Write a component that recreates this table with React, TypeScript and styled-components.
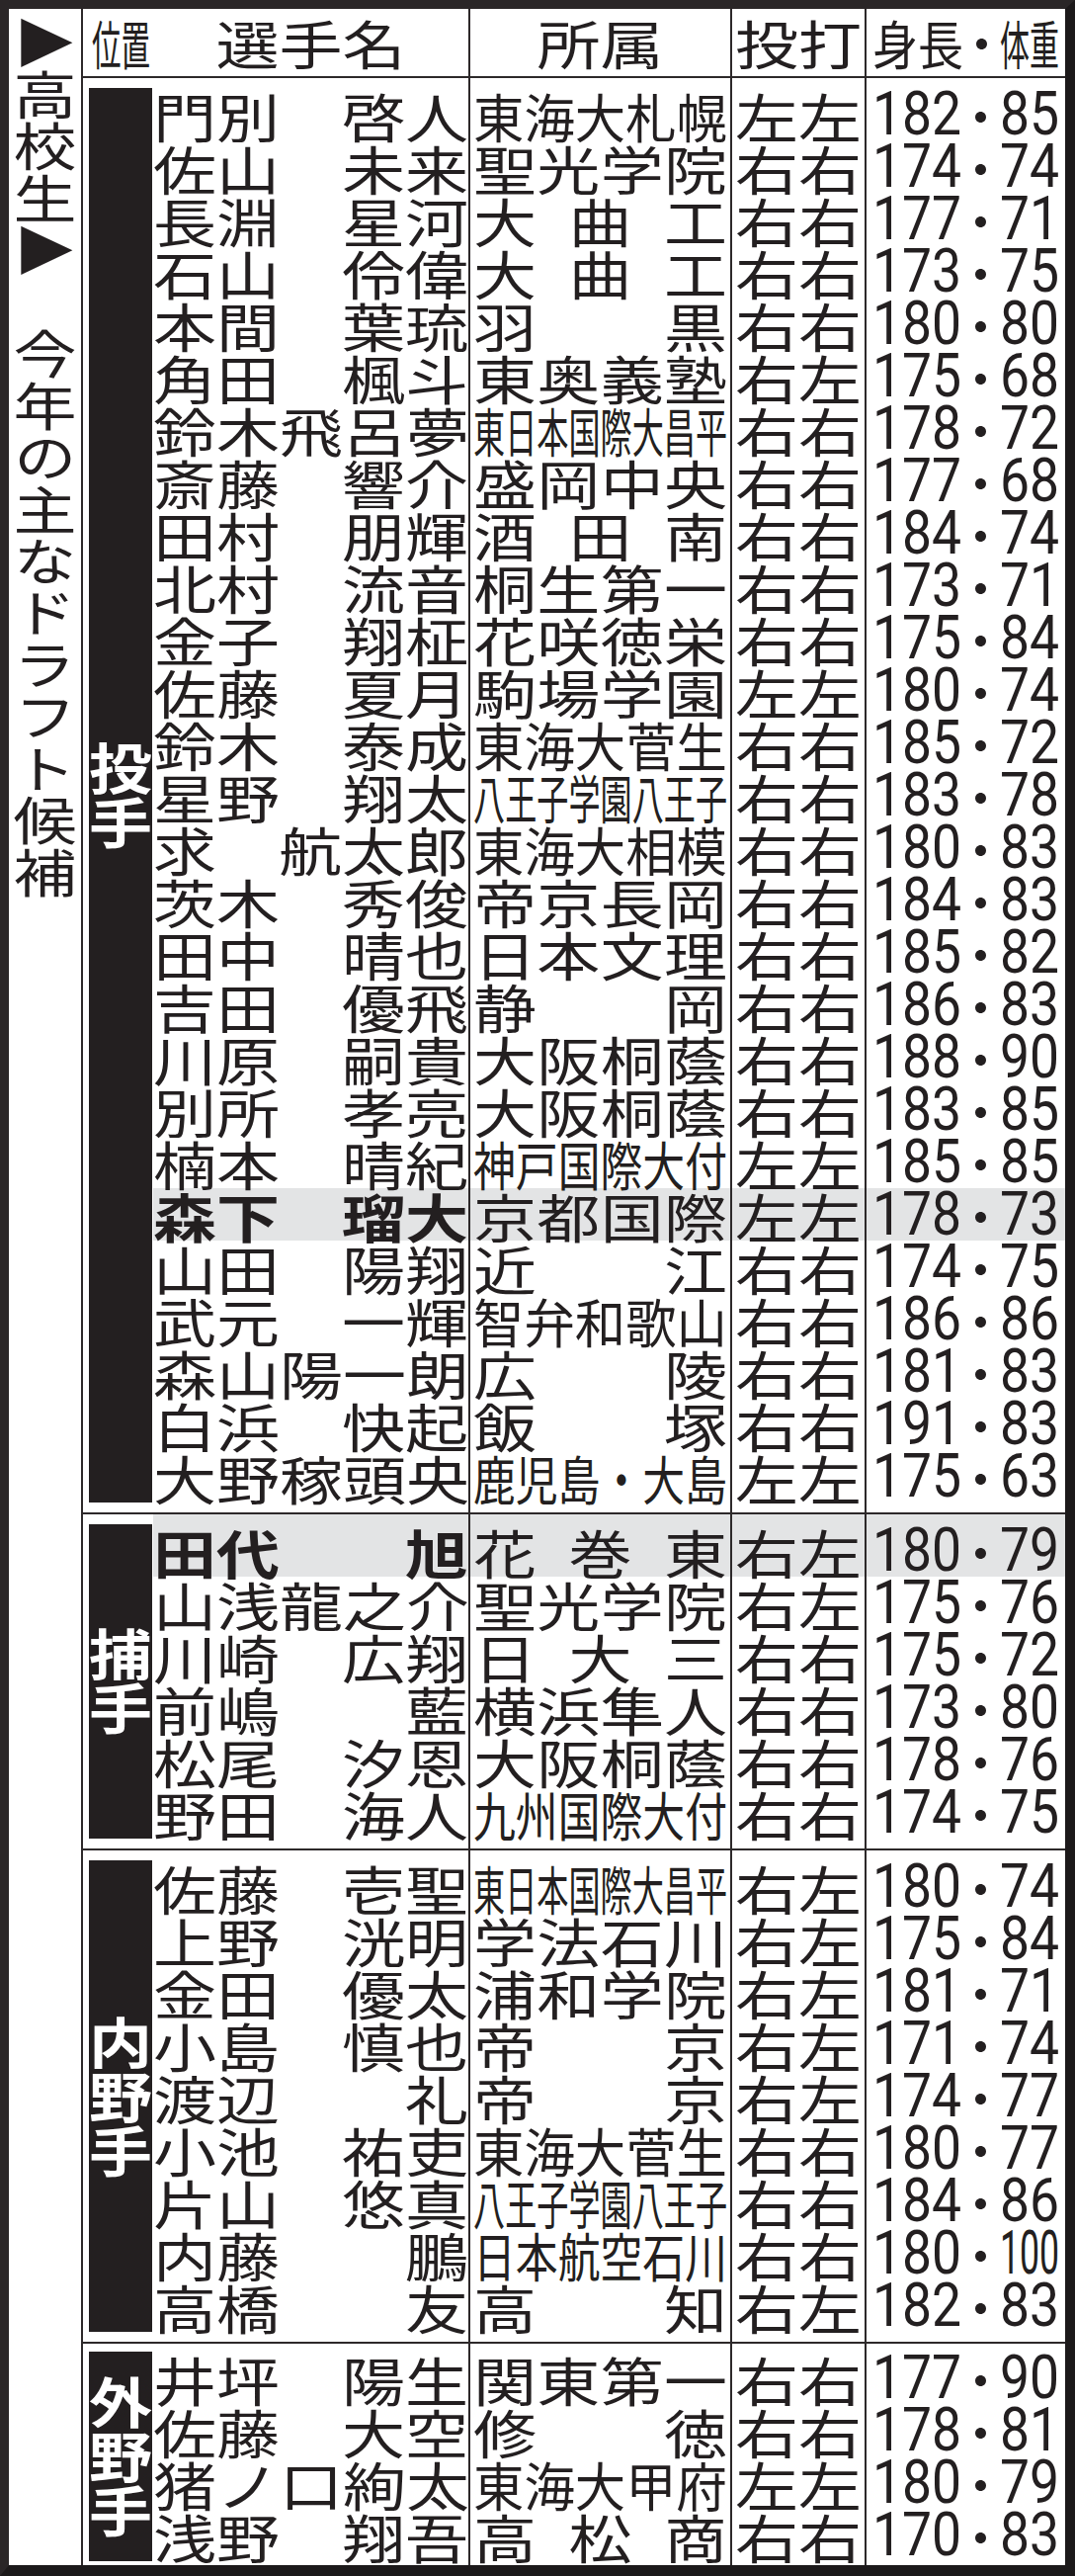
import React from 'react';
import styled, { createGlobalStyle } from 'styled-components';

const INK = '#231f20';
const RULE = '#2d292a';
const HILITE = '#e3e4e5';
const JP = '"Noto Sans CJK JP", "Noto Sans", sans-serif';
const NUM = 'Roboto, "Liberation Sans", sans-serif';
const FS = 64; // body type size
const FLAT = 0.84; // vertical squash of the flattened newspaper type
const ROW = 53;
const DIGIT = 0.5615 * 61; // Roboto digit advance at 61px

type Player = { name: string; school: string; hand: string; h: string; w: string; hl?: boolean };
type Group = { label: string; pt: number; pb: number; players: Player[] };

const p = (name: string, school: string, hand: string, body: string, hl = false): Player => {
  const [h, w] = body.split('・');
  return { name, school, hand, h, w, hl };
};

const groups: Group[] = [
  {
    label: '投手',
    pt: 10,
    pb: 10,
    players: [
      p('門別/啓人', '東海大札幌', '左左', '182・85'),
      p('佐山/未来', '聖光学院', '右右', '174・74'),
      p('長淵/星河', '大曲工', '右右', '177・71'),
      p('石山/伶偉', '大曲工', '右右', '173・75'),
      p('本間/葉琉', '羽黒', '右右', '180・80'),
      p('角田/楓斗', '東奥義塾', '右左', '175・68'),
      p('鈴木/飛呂夢', '東日本国際大昌平', '右右', '178・72'),
      p('斎藤/響介', '盛岡中央', '右右', '177・68'),
      p('田村/朋輝', '酒田南', '右右', '184・74'),
      p('北村/流音', '桐生第一', '右右', '173・71'),
      p('金子/翔柾', '花咲徳栄', '右右', '175・84'),
      p('佐藤/夏月', '駒場学園', '左左', '180・74'),
      p('鈴木/泰成', '東海大菅生', '右右', '185・72'),
      p('星野/翔太', '八王子学園八王子', '右右', '183・78'),
      p('求/航太郎', '東海大相模', '右右', '180・83'),
      p('茨木/秀俊', '帝京長岡', '右右', '184・83'),
      p('田中/晴也', '日本文理', '右右', '185・82'),
      p('吉田/優飛', '静岡', '右右', '186・83'),
      p('川原/嗣貴', '大阪桐蔭', '右右', '188・90'),
      p('別所/孝亮', '大阪桐蔭', '右右', '183・85'),
      p('楠本/晴紀', '神戸国際大付', '左左', '185・85'),
      p('森下/瑠大', '京都国際', '左左', '178・73', true),
      p('山田/陽翔', '近江', '右右', '174・75'),
      p('武元/一輝', '智弁和歌山', '右右', '186・86'),
      p('森山/陽一朗', '広陵', '右右', '181・83'),
      p('白浜/快起', '飯塚', '右右', '191・83'),
      p('大野/稼頭央', '鹿児島・大島', '左左', '175・63'),
    ],
  },
  {
    label: '捕手',
    pt: 10,
    pb: 10,
    players: [
      p('田代/旭', '花巻東', '右左', '180・79', true),
      p('山浅/龍之介', '聖光学院', '右左', '175・76'),
      p('川崎/広翔', '日大三', '右右', '175・72'),
      p('前嶋/藍', '横浜隼人', '右右', '173・80'),
      p('松尾/汐恩', '大阪桐蔭', '右右', '178・76'),
      p('野田/海人', '九州国際大付', '右右', '174・75'),
    ],
  },
  {
    label: '内野手',
    pt: 10,
    pb: 10,
    players: [
      p('佐藤/壱聖', '東日本国際大昌平', '右左', '180・74'),
      p('上野/洸明', '学法石川', '右左', '175・84'),
      p('金田/優太', '浦和学院', '右左', '181・71'),
      p('小島/慎也', '帝京', '右左', '171・74'),
      p('渡辺/礼', '帝京', '右左', '174・77'),
      p('小池/祐吏', '東海大菅生', '右右', '180・77'),
      p('片山/悠真', '八王子学園八王子', '右右', '184・86'),
      p('内藤/鵬', '日本航空石川', '右右', '180・100'),
      p('高橋/友', '高知', '右左', '182・83'),
    ],
  },
  {
    label: '外野手',
    pt: 8,
    pb: 4,
    players: [
      p('井坪/陽生', '関東第一', '右右', '177・90'),
      p('佐藤/大空', '修徳', '右右', '178・81'),
      p('猪ノ口/絢太', '東海大甲府', '左左', '180・79'),
      p('浅野/翔吾', '高松商', '右右', '170・83'),
    ],
  },
];

const GlobalStyle = createGlobalStyle`
  html, body {
    margin: 0;
    padding: 0;
    background: #fff;
  }
  body {
    overflow: hidden;
    font-family: ${JP};
    color: ${INK};
  }
`;

const Frame = styled.div`
  box-sizing: border-box;
  width: 1088px;
  height: 2606px;
  display: flex;
  border-style: solid;
  border-width: 9px 10px 11px 9px;
  border-color: #2a2627 #1c191a #1c191a #2a2627;
  background: #fff;
`;

const Side = styled.div`
  flex: none;
  box-sizing: border-box;
  width: 73px;
  padding-top: 8px;
  display: flex;
  justify-content: center;
`;

const SideText = styled.div`
  writing-mode: vertical-rl;
  text-orientation: upright;
  font-size: 64px;
  line-height: 1;
  white-space: nowrap;
  transform: scaleY(0.82);
  transform-origin: top center;
`;

const Table = styled.div`
  flex: 1;
  display: flex;
  flex-direction: column;
  border-left: 2px solid ${RULE};
`;

const Cell = styled.div<{ $rule?: boolean; $pl?: number; $pr?: number; $h?: number; $align?: string; $num?: boolean }>`
  display: flex;
  align-items: center;
  justify-content: ${(p) => p.$align ?? 'flex-start'};
  height: ${(p) => p.$h ?? ROW}px;
  padding-left: ${(p) => p.$pl ?? 0}px;
  padding-right: ${(p) => p.$pr ?? 0}px;
  border-left: ${(p) => (p.$rule ? `2px solid ${RULE}` : '0')};
  font-family: ${(p) => (p.$num ? NUM : JP)};
  font-size: ${(p) => (p.$num ? 61 : FS)}px;
  min-width: 0;
`;

const Header = styled.div`
  display: grid;
  grid-template-columns: 71px 319px 265px 136px 203px;
  border-bottom: 2px solid ${RULE};
  ${Cell} {
    padding-bottom: 3px;
  }
`;

const Section = styled.div<{ $last?: boolean }>`
  display: flex;
  border-bottom: ${(p) => (p.$last ? '0' : `2px solid ${RULE}`)};
`;

const PosCol = styled.div<{ $pt: number; $pb: number }>`
  flex: none;
  box-sizing: border-box;
  width: 71px;
  padding: ${(p) => p.$pt}px 2px ${(p) => p.$pb}px 6px;
  display: flex;
`;

const PosBar = styled.div`
  flex: 1;
  display: flex;
  align-items: center;
  justify-content: center;
  background: ${INK};
  color: #fff;
`;

const PosLabel = styled.span`
  writing-mode: vertical-rl;
  text-orientation: upright;
  font-size: 64px;
  font-weight: 700;
  line-height: 1;
  transform: scaleY(0.86);
`;

const Rows = styled.div`
  flex: 1;
  display: flex;
  flex-direction: column;
`;

const Row = styled.div<{ $pt: number; $pb: number; $hl?: boolean }>`
  display: grid;
  grid-template-columns: 319px 265px 136px 203px;
  background: ${(p) => (p.$hl ? HILITE : 'transparent')};
  ${Cell} {
    padding-top: ${(p) => p.$pt}px;
    padding-bottom: ${(p) => p.$pb}px;
  }
`;

const Box = styled.span<{ $w: number }>`
  flex: none;
  display: flex;
  width: ${(p) => p.$w}px;
`;

const Track = styled.span<{ $w: number; $sx: number; $sy: number; $justify: string; $bold?: boolean }>`
  flex: none;
  display: flex;
  justify-content: ${(p) => p.$justify};
  width: ${(p) => p.$w / p.$sx}px;
  line-height: 1;
  white-space: nowrap;
  font-weight: ${(p) => (p.$bold ? 700 : 400)};
  transform: scale(${(p) => p.$sx}, ${(p) => p.$sy});
  transform-origin: left center;
`;

const Dot = styled.span`
  flex: none;
  width: 20px;
  display: flex;
  justify-content: center;
  font-family: ${JP};
  font-size: 52px;
  font-weight: 400;
  line-height: 1;
`;

type FitProps = { w: number; sx?: number; sy?: number; justify?: string; bold?: boolean; children: React.ReactNode };

function Fit({ w, sx = 1, sy = FLAT, justify = 'space-between', bold, children }: FitProps) {
  return (
    <Box $w={w}>
      <Track $w={w} $sx={sx} $sy={sy} $justify={justify} $bold={bold}>
        {children}
      </Track>
    </Box>
  );
}

const chars = (s: string) => Array.from(s).map((c, i) => <span key={i}>{c}</span>);

function Measure({ h, w }: { h: string; w: string }) {
  return (
    <Cell $rule $num $pl={6} $pr={6} $align="space-between">
      <Fit w={90} sx={90 / (h.length * DIGIT)} sy={1} justify="center">
        {h}
      </Fit>
      <Dot>・</Dot>
      <Fit w={60} sx={60 / (w.length * DIGIT)} sy={1} justify="center">
        {w}
      </Fit>
    </Cell>
  );
}

function PlayerRow({ player, pt, pb }: { player: Player; pt: number; pb: number }) {
  const [sur, given] = player.name.split('/');
  const n = Array.from(player.school).length;
  const sx = n <= 4 ? 1 : 257 / (n * FS);
  return (
    <Row $pt={pt} $pb={pb} $hl={player.hl}>
      <Cell>
        <Fit w={319} bold={player.hl}>
          <span>{sur}</span>
          <span>{given}</span>
        </Fit>
      </Cell>
      <Cell $rule $pl={3}>
        <Fit w={257} sx={sx}>
          {chars(player.school)}
        </Fit>
      </Cell>
      <Cell $rule $pl={3}>
        <Fit w={128}>{chars(player.hand)}</Fit>
      </Cell>
      <Measure h={player.h} w={player.w} />
    </Row>
  );
}

export default function App() {
  return (
    <>
      <GlobalStyle />
      <Frame>
        <Side>
          <SideText>▶高校生▶　今年の主なドラフト候補</SideText>
        </Side>
        <Table>
          <Header>
            <Cell $h={65} $pl={9}>
              <Fit w={59} sx={59 / 128}>
                {chars('位置')}
              </Fit>
            </Cell>
            <Cell $h={65} $align="center">
              <Fit w={192}>{chars('選手名')}</Fit>
            </Cell>
            <Cell $h={65} $rule $align="center">
              <Fit w={128}>{chars('所属')}</Fit>
            </Cell>
            <Cell $h={65} $rule $pl={3}>
              <Fit w={128}>{chars('投打')}</Fit>
            </Cell>
            <Cell $h={65} $rule $pl={6} $pr={6} $align="space-between">
              <Fit w={92} sx={92 / 128}>
                {chars('身長')}
              </Fit>
              <Dot>・</Dot>
              <Fit w={60} sx={60 / 128}>
                {chars('体重')}
              </Fit>
            </Cell>
          </Header>
          {groups.map((g, gi) => (
            <Section key={g.label} $last={gi === groups.length - 1}>
              <PosCol $pt={g.pt} $pb={g.pb}>
                <PosBar>
                  <PosLabel>{g.label}</PosLabel>
                </PosBar>
              </PosCol>
              <Rows>
                {g.players.map((pl, i) => (
                  <PlayerRow
                    key={pl.name}
                    player={pl}
                    pt={i === 0 ? g.pt : 0}
                    pb={i === g.players.length - 1 ? g.pb : 0}
                  />
                ))}
              </Rows>
            </Section>
          ))}
        </Table>
      </Frame>
    </>
  );
}
